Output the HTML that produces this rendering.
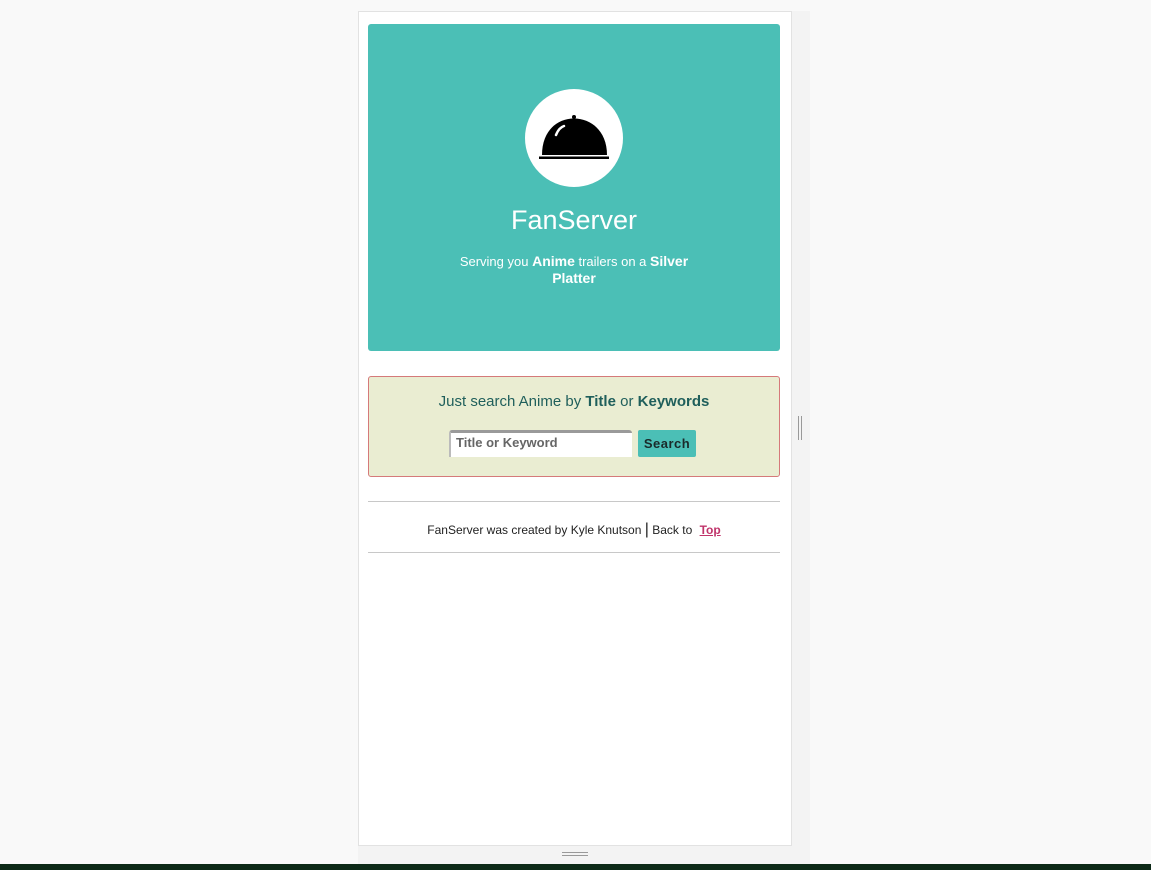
<!DOCTYPE html>
<html><head><style>
body{margin:0;width:1151px;height:870px;background:#f9f9f9;position:relative;overflow:hidden;font-family:"Liberation Sans",sans-serif}
.side{position:absolute;left:791px;top:11px;width:19px;height:853px;background:#f3f3f3}
.bot{position:absolute;left:358px;top:845px;width:452px;height:19px;background:#f3f3f3}
.frame{position:absolute;left:358px;top:11px;width:432px;height:833px;background:#fff;border:1px solid #e2e2e2}
.hero{position:absolute;left:368px;top:24px;width:412px;height:327px;background:#4bbfb6;border-radius:3px}
.circ{position:absolute;left:157px;top:65px;width:98px;height:98px;border-radius:50%;background:#fff}
.title{position:absolute;left:0;width:412px;top:181px;text-align:center;color:#fff;font-size:27px}
.sub{position:absolute;left:80px;width:252px;top:229px;text-align:center;color:#fff;font-size:13px;line-height:17px}
.sub b{font-size:14px}
.search{position:absolute;left:368px;top:376px;width:410px;height:99px;background:#eaedd2;border:1px solid #d57a7a;border-radius:3px}
.sh{position:absolute;top:16px;width:410px;text-align:center;color:#1f5f5b;font-size:15px}
.inp{position:absolute;left:80px;top:53px;width:176px;height:24px;background:#fff;border-top:3px solid #9a9a9a;border-left:2px solid #bbb;border-radius:3px 3px 0 0;font-size:13px;color:#666;font-weight:bold;padding-left:5px;line-height:20px;box-sizing:content-box}
.btn{position:absolute;left:269px;top:53px;width:58px;height:27px;background:#4bbfb6;border-radius:2px;color:#1a2a2a;font-weight:bold;font-size:13px;text-align:center;line-height:27px;letter-spacing:.5px}
.hr{position:absolute;left:368px;width:412px;height:1px;background:#c8c8c8}
.foot{position:absolute;left:368px;width:412px;top:521px;text-align:center;font-size:12px;color:#222}
.foot a{color:#c0336a;font-weight:bold;text-decoration:underline;margin-left:4px}
.bar{position:absolute;left:0;top:864px;width:1151px;height:6px;background:#0d2a18}
</style></head><body>
<div class="side"></div><div class="bot"></div>
<div class="frame"></div>
<div class="hero">
<div class="circ"></div>
<svg style="position:absolute;left:157px;top:65px" width="98" height="98" viewBox="0 0 98 98">
<circle cx="49" cy="28" r="2" fill="#000"/>
<path d="M17 66 C17 42 32 29.5 49 29.5 C66 29.5 82 42 82 66 Z" fill="#000"/>
<path d="M31 46 C33 41 36 38 39 37" stroke="#fff" stroke-width="2.5" fill="none" stroke-linecap="round"/>
<rect x="14" y="67.5" width="70" height="2.5" fill="#000"/>
</svg>
<div class="title">FanServer</div>
<div class="sub">Serving you <b>Anime</b> trailers on a <b>Silver Platter</b></div>
</div>
<div class="search">
<div class="sh">Just search Anime by <b>Title</b> or <b>Keywords</b></div>
<div class="inp">Title or Keyword</div>
<div class="btn">Search</div>
</div>
<div class="hr" style="top:501px"></div>
<div class="foot">FanServer was created by Kyle Knutson <span style="font-size:16px">|</span> Back to <a>Top</a></div>
<div class="hr" style="top:552px"></div>
<div style="position:absolute;left:798px;top:416px;height:24px;border-left:1px solid #999;border-right:1px solid #999;width:2px"></div>
<div style="position:absolute;left:562px;top:852px;width:26px;height:2px;border-top:1px solid #999;border-bottom:1px solid #999"></div>
<div class="bar"></div>
</body></html>
